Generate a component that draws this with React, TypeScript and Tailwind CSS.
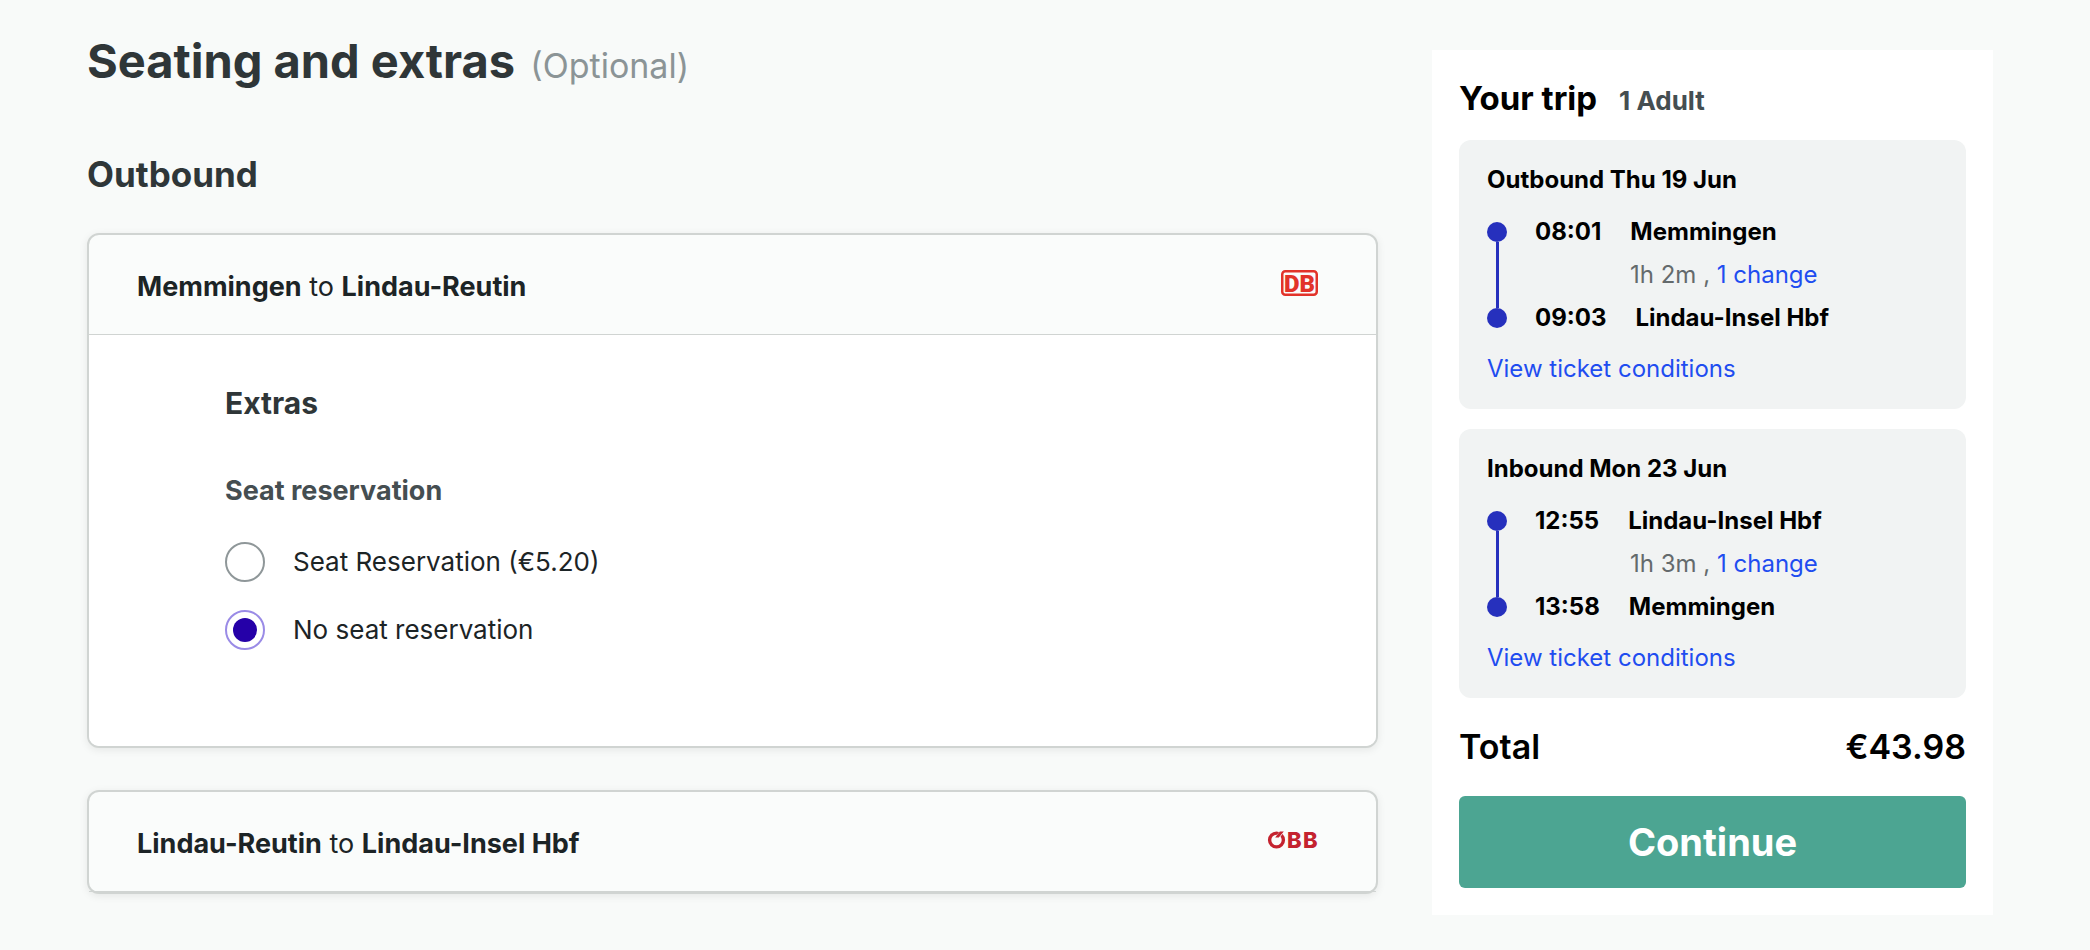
import React, { useState } from 'react'

type Trip = {
  title: string
  departure: string
  from: string
  duration: string
  arrival: string
  to: string
}

const trips: Trip[] = [
  {
    title: 'Outbound Thu 19 Jun',
    departure: '08:01',
    from: 'Memmingen',
    duration: '1h 2m',
    arrival: '09:03',
    to: 'Lindau-Insel Hbf',
  },
  {
    title: 'Inbound Mon 23 Jun',
    departure: '12:55',
    from: 'Lindau-Insel Hbf',
    duration: '1h 3m',
    arrival: '13:58',
    to: 'Memmingen',
  },
]

const seatOptions = [
  { id: 'seat-reservation', label: 'Seat Reservation (€5.20)' },
  { id: 'no-seat-reservation', label: 'No seat reservation' },
]

function DbLogo() {
  return (
    <svg width="37" height="26" viewBox="0 0 37 26" className="overflow-visible" role="img" aria-label="DB">
      <rect x="1.25" y="1.25" width="34.5" height="23.5" rx="3" fill="#fafcfb" stroke="#e2332a" strokeWidth="2.5" />
      <text
        x="18.5"
        y="21.5"
        textAnchor="middle"
        fontFamily="Roboto, sans-serif"
        fontWeight="900"
        fontSize="24"
        fill="#e2332a"
      >
        DB
      </text>
    </svg>
  )
}

function ObbLogo() {
  return (
    <svg width="50" height="20" viewBox="0 0 50 20" className="overflow-visible" role="img" aria-label="ÖBB">
      <circle cx="8.5" cy="10" r="6.9" fill="none" stroke="#c4232f" strokeWidth="3.4" />
      <path d="M7 7.5 L13 -0.5 L18 -0.5 L11 8.5 Z" fill="#fafcfb" />
      <path d="M7.2 7.6 L11.8 1.4 L15.8 1.4 L10.8 7.6 Z" fill="#c4232f" />
      <g fontFamily="Inter, sans-serif" fontWeight="800" fontSize="22" fill="#c4232f">
        <text x="19" y="18">
          B
        </text>
        <text x="35" y="18">
          B
        </text>
      </g>
    </svg>
  )
}

function LegHeader({ from, to, logo }: { from: string; to: string; logo: React.ReactNode }) {
  return (
    <div className="flex items-start justify-between border-b border-[#d0d4d2] pt-9 pr-[58px] pb-[31px] pl-12">
      <h3 className="text-[27px] leading-8 text-[#1c2426]">
        <span className="font-bold">{from}</span> to <span className="font-bold">{to}</span>
      </h3>
      <div className="flex h-6 items-center">{logo}</div>
    </div>
  )
}

function TripCard({ trip }: { trip: Trip }) {
  return (
    <section className="rounded-xl bg-[#f1f3f3] px-7 py-[25px] text-2xl leading-[30px]">
      <h3 className="font-bold">{trip.title}</h3>
      <div className="mt-[22px] flex gap-7">
        <div className="flex w-5 flex-col items-center py-[5px]">
          <span className="size-5 rounded-full bg-[#2630bd]" />
          <span className="w-[3px] flex-1 bg-[#2630bd]" />
          <span className="size-5 rounded-full bg-[#2630bd]" />
        </div>
        <div className="flex flex-col gap-[13px]">
          <div className="flex gap-[29px] font-bold">
            <time>{trip.departure}</time>
            <span>{trip.from}</span>
          </div>
          <p className="pl-[95px] text-[#646a6c]">
            {trip.duration} ,{' '}
            <a href="#changes" className="text-[#1f4df0]">
              1 change
            </a>
          </p>
          <div className="flex gap-[29px] font-bold">
            <time>{trip.arrival}</time>
            <span>{trip.to}</span>
          </div>
        </div>
      </div>
      <a href="#conditions" className="mt-[21px] block text-[#1f4df0]">
        View ticket conditions
      </a>
    </section>
  )
}

function App() {
  const [seat, setSeat] = useState('no-seat-reservation')

  return (
    <div className="flex min-h-screen items-start gap-[54px] bg-[#f8faf9] pr-[97px] pl-[87px] font-['Inter',sans-serif]">
      <main className="flex-1 pt-[31px] pb-14">
        <h1 className="text-[47px] leading-[60px] font-bold text-[#2f3638]">
          Seating and extras{' '}
          <span className="ml-1 text-[34px] leading-none font-normal text-[#8b9496]">(Optional)</span>
        </h1>

        <h2 className="mt-[63px] text-[35px] leading-10 font-bold text-[#2f3638]">Outbound</h2>

        {/* First leg */}
        <section className="mt-[39px] rounded-xl border-2 border-[#d0d4d2] bg-[#fafcfb] shadow-[0_2px_8px_rgba(0,0,0,0.08)]">
          <LegHeader from="Memmingen" to="Lindau-Reutin" logo={<DbLogo />} />
          <div className="rounded-b-[10px] bg-white px-[136px] pt-[50px] pb-24">
            <h4 className="text-[30px] leading-9 font-bold text-[#2f3638]">Extras</h4>
            <fieldset className="mt-[54px]">
              <legend className="text-[27px] leading-8 font-bold text-[#454e51]">Seat reservation</legend>
              <div className="mt-[35px] flex flex-col gap-7">
                {seatOptions.map((option) => (
                  <label
                    key={option.id}
                    htmlFor={option.id}
                    className="flex h-10 cursor-pointer items-center gap-7 text-[26px] leading-8 text-[#1c2426]"
                  >
                    <input
                      type="radio"
                      id={option.id}
                      name="seat"
                      checked={seat === option.id}
                      onChange={() => setSeat(option.id)}
                      className="grid size-10 appearance-none place-items-center rounded-full border-2 border-[#8f9799] bg-white before:size-6 before:rounded-full before:content-[''] checked:border-[#9a8be6] checked:before:bg-[#2500a8]"
                    />
                    {option.label}
                  </label>
                ))}
              </div>
            </fieldset>
          </div>
        </section>

        {/* Second leg */}
        <section className="mt-[42px] rounded-xl border-2 border-[#d0d4d2] bg-[#fafcfb] shadow-[0_2px_8px_rgba(0,0,0,0.08)]">
          <LegHeader from="Lindau-Reutin" to="Lindau-Insel Hbf" logo={<ObbLogo />} />
        </section>
      </main>

      {/* Trip summary */}
      <aside className="mt-[50px] w-[561px] shrink-0 bg-white px-[27px] pt-7 pb-[27px] text-black">
        <div className="flex items-baseline gap-[22px]">
          <h2 className="text-[33px] leading-10 font-bold">Your trip</h2>
          <span className="text-[26px] leading-8 font-bold text-[#454e51]">1 Adult</span>
        </div>
        <div className="mt-[22px] flex flex-col gap-5">
          {trips.map((trip) => (
            <TripCard key={trip.title} trip={trip} />
          ))}
        </div>
        <div className="mt-[29px] flex justify-between text-[34px] leading-10 font-semibold">
          <span>Total</span>
          <span>€43.98</span>
        </div>
        <button
          type="button"
          className="mt-[29px] block h-[92px] w-full cursor-pointer rounded-md bg-[#4ca592] text-[38px] font-bold text-white"
        >
          Continue
        </button>
      </aside>
    </div>
  )
}

export default App
